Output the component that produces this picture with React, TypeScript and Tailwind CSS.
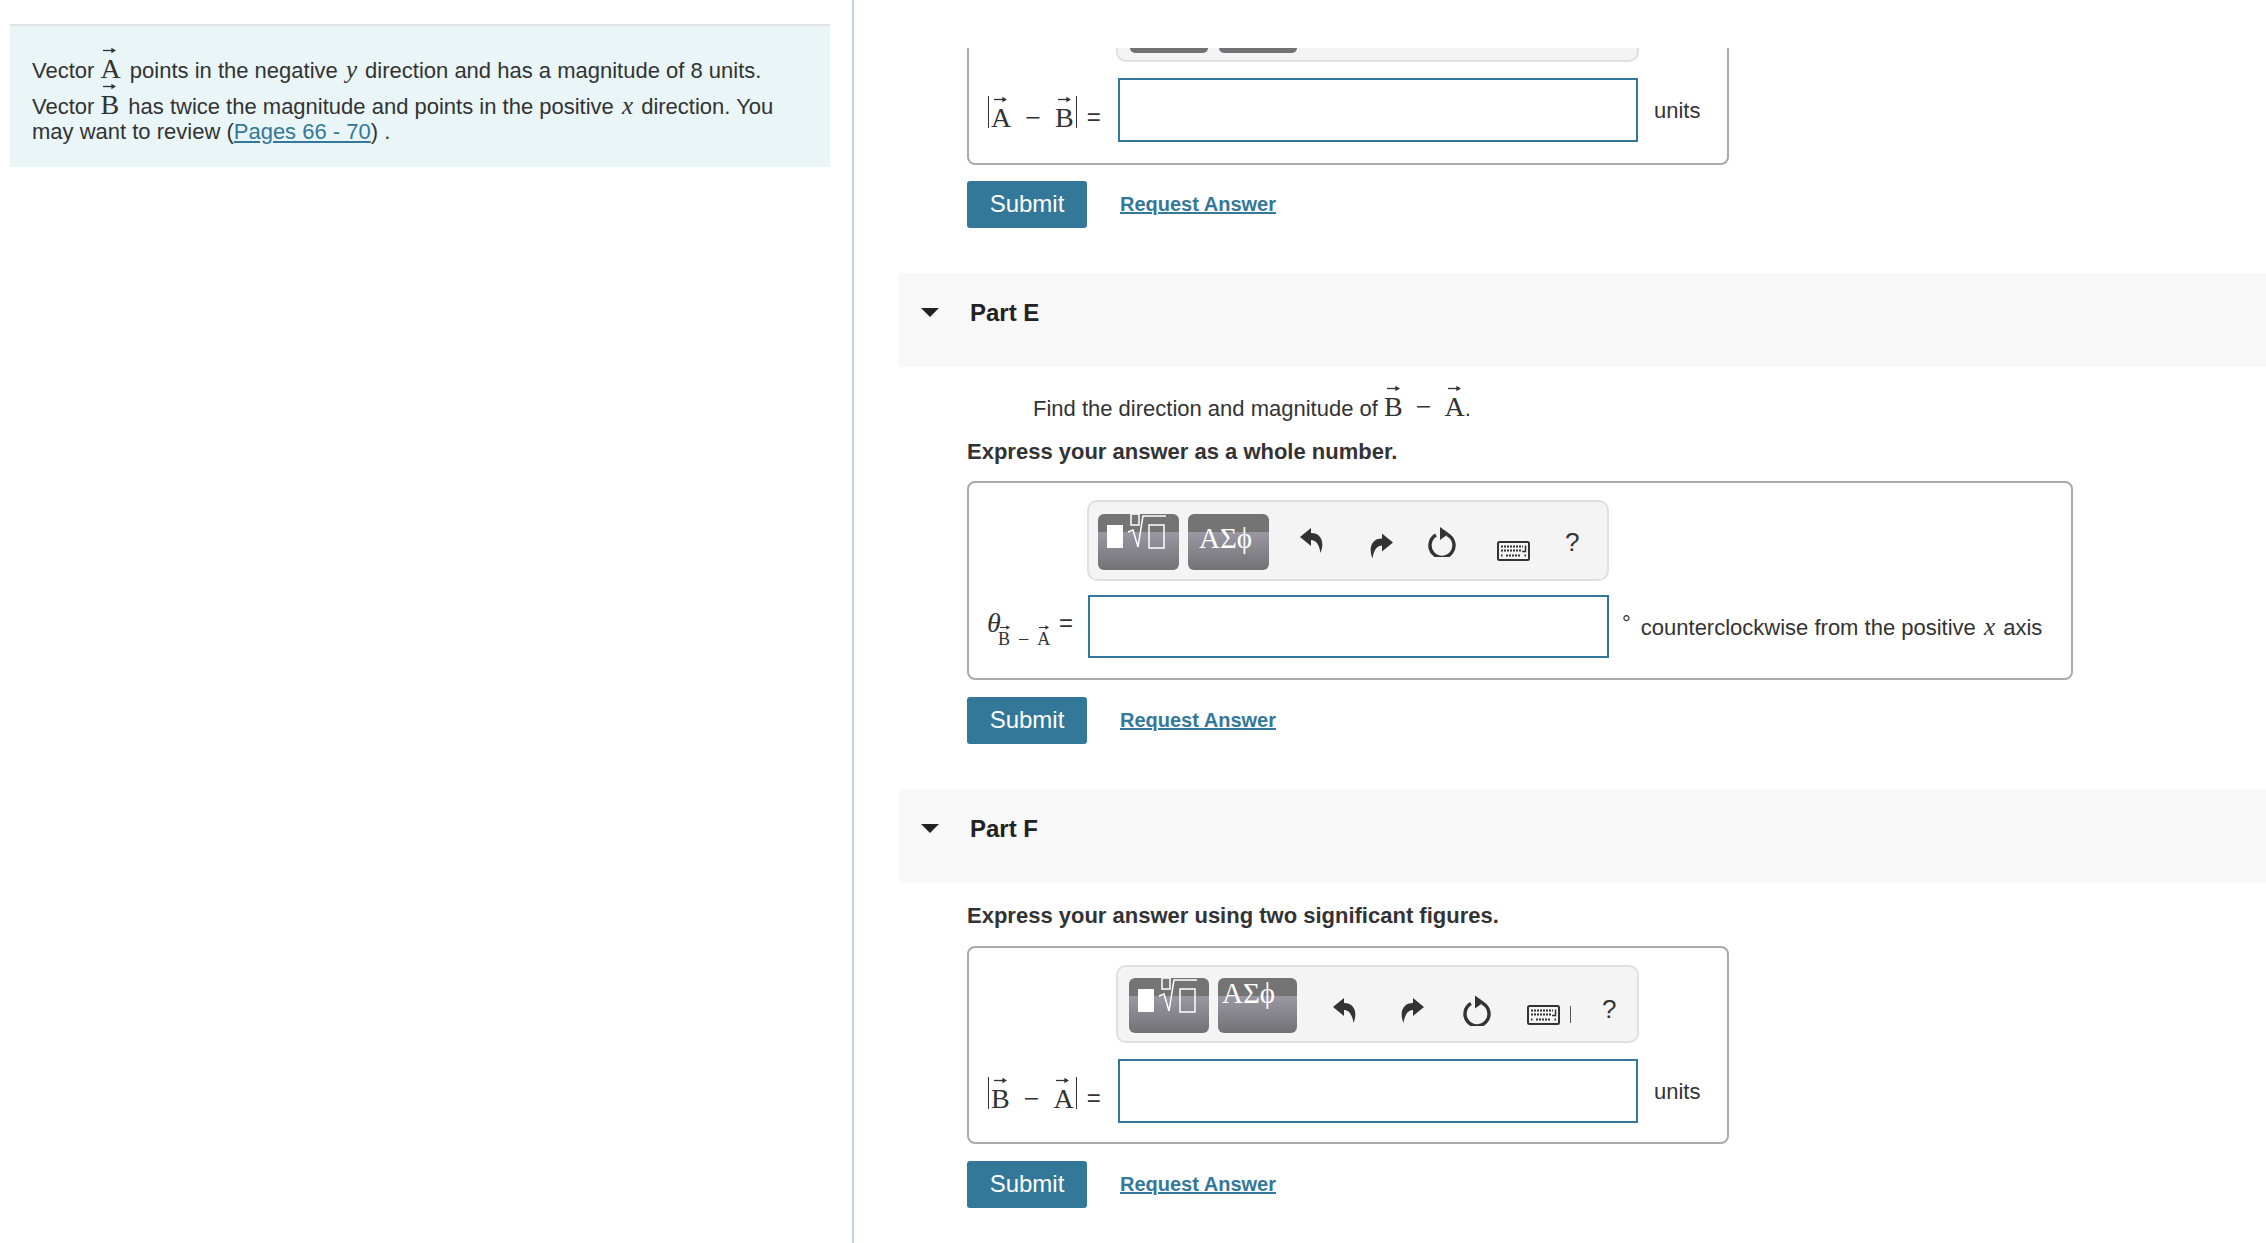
import type { ReactNode } from "react";

const sans = "font-['Liberation_Sans',Arial,sans-serif]";
const serif = "font-['Liberation_Serif','Times_New_Roman',serif]";

const Vec = ({ l, small }: { l: string; small?: boolean }) => (
  <span className={`relative inline-block ${serif} ${small ? "pt-[5px] text-[18px] leading-[18px]" : "pt-[9px] text-[28px] leading-[26px]"}`}>
    <svg
      viewBox="0 0 14 7"
      className={`absolute ${small ? "left-[2px] top-0 h-[5px] w-[10px]" : "left-[3px] top-0 h-[7px] w-[13px]"}`}
    >
      <path d="M0 3.5H12" stroke="#333" strokeWidth="1.4" />
      <path d="M9 0.5L14 3.5L9 6.5Z" fill="#333" />
    </svg>
    {l}
  </span>
);

const MathVar = ({ v }: { v: string }) => <i className={`${serif} mx-[2px] text-[25px]`}>{v}</i>;

const Panel = () => (
  <div className="border-t-2 border-[#dfe3e3] bg-[#e9f5f7] pb-[23px] pl-[22px] pr-[30px] pt-[21px] text-[22px] leading-[25px] text-[#333]">
    <p>
      Vector <Vec l="A" /><span className="ml-[3px]"> points</span> in the negative <MathVar v="y" /> direction and has a magnitude of 8 units.
      <br />
      Vector <Vec l="B" /><span className="ml-[3px]"> has</span> twice the magnitude and points in the positive <MathVar v="x" /> direction. You
      <br />
      may want to review (<a className="text-[#337899] underline">Pages 66 - 70</a>) .
    </p>
  </div>
);

const TemplateIcon = () => (
  <svg viewBox="0 0 80 40" className="absolute left-0 top-0 h-[40px] w-[80px]" fill="none" stroke="#fff" strokeWidth="1.5">
    <rect x="9" y="11" width="16" height="23" fill="#fff" stroke="none" />
    <rect x="33" y="0" width="8" height="11" />
    <path d="M30 18L35 16L40 33L45 2H68" />
    <rect x="51" y="11" width="15" height="23" />
  </svg>
);

const ToolButton = ({ className, children }: { className: string; children: ReactNode }) => (
  <div
    className={`relative overflow-hidden rounded-[6px] bg-[linear-gradient(#747474_0,#747474_32%,#9a98a3_32%,#727275_100%)] ${className}`}
  >
    {children}
  </div>
);

const Undo = ({ className }: { className: string }) => (
  <svg viewBox="0 0 23 25" className={className} fill="#333">
    <path d="M11 0L0 9L11 18V12C15 12 19 15 20.500 25C25 14 21 5 11 5Z" />
  </svg>
);

const Redo = ({ className }: { className: string }) => (
  <svg viewBox="0 0 23 25" className={className} fill="#333">
    <path d="M12 0L23 9L12 18V12C8 12 4 15 2.500 25C-2 14 2 5 12 5Z" />
  </svg>
);

const Reload = ({ className }: { className: string }) => (
  <svg viewBox="0 0 28 30" className={className} fill="none">
    <path d="M19 7.500A12 12 0 1 1 8 8" stroke="#333" strokeWidth="3.400" />
    <path d="M12 0L21 6.500L12 13Z" fill="#333" />
  </svg>
);

const Keyboard = ({ className }: { className: string }) => (
  <svg viewBox="0 0 33 20" className={className} fill="none">
    <rect x="1" y="1" width="31" height="18" rx="1.500" stroke="#333" strokeWidth="2" />
    <path d="M4 5.500H26M4 9.500H24M4 14.500H5.500M9 14.500H24M27.500 14.500H29" stroke="#333" strokeWidth="2" strokeDasharray="2 1" />
    <path d="M28.500 4.500V10.500H25" stroke="#333" strokeWidth="1.500" />
  </svg>
);

const ToolbarE = () => (
  <div className="flex h-[81px] w-[522px] items-start rounded-[10px] border-2 border-[#e0e0e0] bg-[#f4f4f4]">
    <ToolButton className="ml-[9px] mt-[12px] h-[56px] w-[81px]">
      <TemplateIcon />
    </ToolButton>
    <ToolButton className="ml-[9px] mt-[12px] h-[56px] w-[81px]">
      <span className={`absolute left-[11px] top-[9px] ${serif} text-[29px] leading-[30px] text-white`}>ΑΣϕ</span>
    </ToolButton>
    <Undo className="ml-[31px] mt-[26px] h-[25px] w-[23px]" />
    <Redo className="ml-[47px] mt-[31px] h-[26px] w-[23px]" />
    <Reload className="ml-[35px] mt-[25px] h-[30px] w-[28px]" />
    <Keyboard className="ml-[41px] mt-[39px] h-[20px] w-[33px]" />
    <span className="ml-[35px] mt-[24px] text-[26px] leading-[32px] text-[#333]">?</span>
  </div>
);

const ToolbarF = () => (
  <div className="flex h-[78px] w-[523px] items-start rounded-[10px] border-2 border-[#e0e0e0] bg-[#f4f4f4]">
    <ToolButton className="ml-[11px] mt-[11px] h-[55px] w-[80px]">
      <TemplateIcon />
    </ToolButton>
    <ToolButton className="ml-[9px] mt-[11px] h-[55px] w-[79px]">
      <span className={`absolute left-[4px] top-0 ${serif} text-[29px] leading-[30px] text-white`}>ΑΣϕ</span>
    </ToolButton>
    <Undo className="ml-[36px] mt-[30px] h-[27px] w-[23px]" />
    <Redo className="ml-[45px] mt-[30px] h-[27px] w-[23px]" />
    <Reload className="ml-[39px] mt-[28px] h-[31px] w-[28px]" />
    <Keyboard className="ml-[36px] mt-[38px] h-[20px] w-[33px]" />
    <div className="ml-[10px] mt-[39px] h-[17px] w-px bg-[#555]" />
    <span className="ml-[31px] mt-[26px] text-[26px] leading-[32px] text-[#333]">?</span>
  </div>
);

const Magnitude = ({ a, b }: { a: string; b: string }) => (
  <div className="flex w-[130px] items-end pl-[19px] pt-[4px] text-[#333]">
    <span className="flex items-end border-x border-[#333] leading-none">
      <span className="-mb-[3px] flex items-end px-[2px]">
        <Vec l={a} />
        <span className={`${serif} mx-[14px] text-[28px] leading-[26px]`}>−</span>
        <Vec l={b} />
      </span>
    </span>
    <span className="ml-[10px] text-[24px] leading-[22px]">=</span>
  </div>
);

const Actions = ({ className }: { className: string }) => (
  <div className={`flex items-center ${className}`}>
    <button className="h-[47px] w-[120px] rounded-[3px] bg-[#337899] pb-[2px] text-[24px] text-white">Submit</button>
    <a className="-mt-[2px] ml-[33px] text-[20px] font-bold text-[#337899] underline">Request Answer</a>
  </div>
);

const PartHeader = ({ label }: { label: string }) => (
  <div className="-ml-[68px] flex h-[94px] items-start bg-[#f8f8f8] pl-[22px] pt-[26px]">
    <div className="mt-[9px] h-0 w-0 border-x-[9px] border-t-[9px] border-x-transparent border-t-[#222]" />
    <span className="ml-[31px] text-[24px] font-bold leading-[27px] text-[#222]">{label}</span>
  </div>
);

const Express = ({ text, className }: { text: string; className: string }) => (
  <p className={`text-[22px] font-bold leading-[26px] text-[#333] ${className}`}>{text}</p>
);

export default function App() {
  return (
    <div className={`flex h-[1243px] w-[2266px] overflow-hidden bg-white ${sans}`}>
      <aside className="h-full w-[854px] shrink-0 border-r-2 border-[#c2d2e4] pl-[10px] pr-[22px] pt-[24px]">
        <Panel />
      </aside>

      <main className="min-w-0 flex-1 pl-[113px] pt-[48px]">
        {/* part D, scrolled so only its lower half shows */}
        <section className="h-[117px] w-[762px] rounded-b-[8px] border-x-2 border-b-2 border-[#aaa]">
          <div className="ml-[147px] flex h-[14px] w-[523px] items-start gap-[11px] rounded-b-[10px] border-x-2 border-b-2 border-[#e0e0e0] bg-[#f4f4f4] pl-[12px]">
            <div className="h-[5px] w-[78px] rounded-b-[6px] bg-[#727275]" />
            <div className="h-[5px] w-[78px] rounded-b-[6px] bg-[#727275]" />
          </div>
          <div className="mt-[16px] flex items-center">
            <Magnitude a="A" b="B" />
            <div className="ml-[19px] h-[64px] w-[520px] border-2 border-[#337899] bg-white" />
            <span className="ml-[16px] text-[22px] text-[#333]">units</span>
          </div>
        </section>
        <Actions className="mt-[16px]" />

        <div className="mt-[45px]">
          <PartHeader label="Part E" />
          <p className="ml-[66px] mt-[18px] text-[22px] leading-[26px] text-[#333]">
            Find the direction and magnitude of <Vec l="B" />
            <span className={`${serif} mx-[13px] text-[28px]`}>−</span>
            <Vec l="A" />.
          </p>
          <Express text="Express your answer as a whole number." className="mt-[17px]" />
          <section className="mt-[16px] h-[199px] w-[1106px] rounded-[8px] border-2 border-[#aaa] pl-[118px] pt-[17px]">
            <ToolbarE />
            <div className="relative mt-[14px] flex items-center">
              <div className="absolute -left-[100px] top-[13px] text-[#333]">
                <span className={`${serif} text-[28px] italic leading-[30px]`}>θ</span>
                <span className="absolute left-[11px] top-[17px] flex items-end whitespace-nowrap">
                  <Vec l="B" small />
                  <span className={`${serif} mx-[8px] text-[20px] leading-[18px]`}>−</span>
                  <Vec l="A" small />
                </span>
                <span className="absolute left-[72px] top-[4px] text-[24px] leading-[22px]">=</span>
              </div>
              <div className="ml-px h-[63px] w-[521px] border-2 border-[#337899] bg-white" />
              <span className="ml-[13px] -mt-[5px] text-[22px] leading-[22px] text-[#333]">°</span>
              <span className="ml-[10px] text-[22px] text-[#333]">
                counterclockwise from the positive <MathVar v="x" /> axis
              </span>
            </div>
          </section>
          <Actions className="mt-[17px]" />
        </div>

        <div className="mt-[45px]">
          <PartHeader label="Part F" />
          <Express text="Express your answer using two significant figures." className="mt-[20px]" />
          <section className="mt-[17px] h-[198px] w-[762px] rounded-[8px] border-2 border-[#aaa] pl-[147px] pt-[17px]">
            <ToolbarF />
            <div className="-ml-[147px] mt-[16px] flex items-center">
              <Magnitude a="B" b="A" />
              <div className="ml-[19px] h-[64px] w-[520px] border-2 border-[#337899] bg-white" />
              <span className="ml-[16px] text-[22px] text-[#333]">units</span>
            </div>
          </section>
          <Actions className="mt-[17px]" />
        </div>
      </main>
    </div>
  );
}
